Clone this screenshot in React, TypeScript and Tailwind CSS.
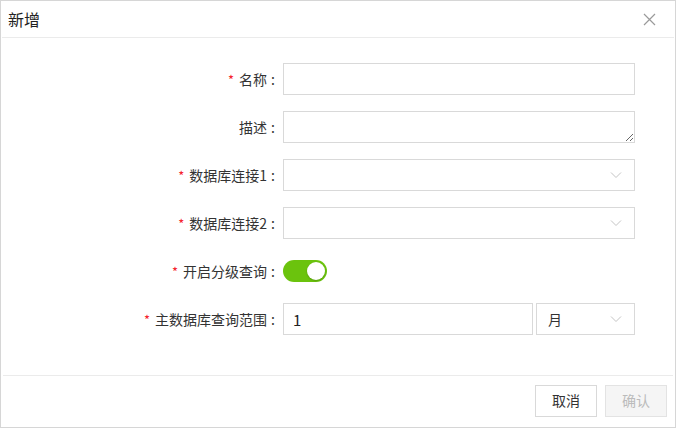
import { useState } from "react";

const font = { fontFamily: '"Noto Sans CJK SC", "Noto Sans", sans-serif' };

function Chevron() {
  return (
    <svg width="12" height="8" viewBox="0 0 12 8" fill="none" className="shrink-0">
      <path d="M1 1.5 L6 6.5 L11 1.5" stroke="#c4c4c4" strokeWidth="1" />
    </svg>
  );
}

function Label({ text, required }: { text: string; required?: boolean }) {
  return (
    <div className="w-[282px] shrink-0 flex items-center justify-end text-[14px] text-[#333]">
      {required && <span className="text-[#f5222d] text-[13px] mr-[5px] leading-none">*</span>}
      <span>{text}</span>
      <span className="ml-[4px] mr-[8px]">:</span>
    </div>
  );
}

function Select({ value, className }: { value?: string; className: string }) {
  return (
    <div
      className={`h-8 border border-[#d9d9d9] bg-white flex items-center justify-between pl-[11px] pr-[12px] text-[14px] text-[#333] ${className}`}
    >
      <span>{value ?? ""}</span>
      <Chevron />
    </div>
  );
}

export default function App() {
  const [on, setOn] = useState(true);

  return (
    <div
      className="w-[676px] h-[428px] bg-white border border-[#d6d6d6] flex flex-col overflow-hidden"
      style={font}
    >
      {/* header */}
      <div className="h-[37px] mx-[1px] flex items-center justify-between pl-[6px] pr-[18px] border-b border-[#ebebeb]">
        <span className="text-[16px] text-[#222]">新增</span>
        <svg width="13" height="13" viewBox="0 0 13 13" fill="none">
          <path d="M1 1 L12 12 M12 1 L1 12" stroke="#9a9a9a" strokeWidth="1.2" />
        </svg>
      </div>

      {/* body */}
      <div className="flex-1 flex flex-col gap-4 pt-[25px] pr-10">
        <div className="flex h-8">
          <Label text="名称" required />
          <input className="w-[352px] h-8 border border-[#d9d9d9] outline-none px-[10px] text-[14px]" />
        </div>
        <div className="flex h-8">
          <Label text="描述" />
          <textarea className="w-[352px] h-8 border border-[#d9d9d9] outline-none px-[10px] text-[14px] resize-y" />
        </div>
        <div className="flex h-8">
          <Label text="数据库连接1" required />
          <Select className="w-[352px]" />
        </div>
        <div className="flex h-8">
          <Label text="数据库连接2" required />
          <Select className="w-[352px]" />
        </div>
        <div className="flex h-8 items-center">
          <Label text="开启分级查询" required />
          <button
            onClick={() => setOn(!on)}
            className={`w-[44px] h-[22px] rounded-full flex items-center px-[2px] ${on ? "bg-[#6bc30d] justify-end" : "bg-[#ccc] justify-start"}`}
          >
            <span className="w-[18px] h-[18px] rounded-full bg-white shadow-[0_1px_2px_rgba(0,0,0,0.2)]" />
          </button>
        </div>
        <div className="flex h-8">
          <Label text="主数据库查询范围" required />
          <div className="flex gap-[3px]">
            <input
              defaultValue="1"
              className="w-[250px] h-8 border border-[#d9d9d9] outline-none px-[9px] text-[15px] text-[#222]"
            />
            <Select value="月" className="w-[99px]" />
          </div>
        </div>
      </div>

      {/* footer */}
      <div className="h-[52px] mx-[2px] border-t border-[#ebebeb] flex items-center justify-end gap-2 pr-[6px] pb-[2px]">
        <button className="w-[62px] h-8 border border-[#d9d9d9] bg-white text-[14px] text-[#333]">取消</button>
        <button className="w-[62px] h-8 border border-[#e3e3e3] bg-[#f5f5f5] text-[14px] text-[#bbb]">确认</button>
      </div>
    </div>
  );
}
